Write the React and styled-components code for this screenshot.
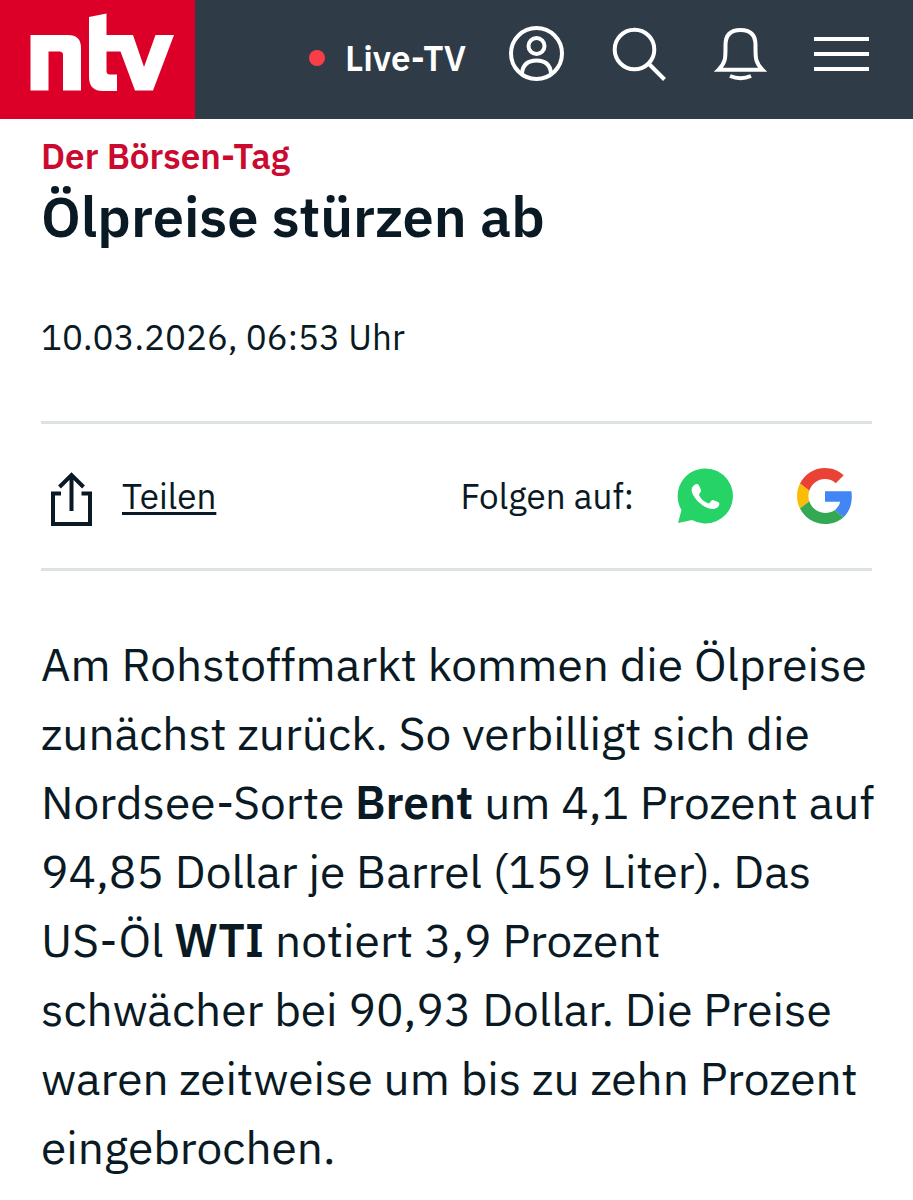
import React from 'react';
import styled, { createGlobalStyle } from 'styled-components';

const GlobalStyle = createGlobalStyle`
  * {
    box-sizing: border-box;
  }

  body {
    margin: 0;
    background: #fff;
    color: #0a1a24;
    font-family: "IBM Plex Sans", "Noto Sans", sans-serif;
  }
`;

const Header = styled.header`
  display: flex;
  height: 119px;
  background: #2f3c48;
`;

const LogoLink = styled.a`
  width: 195px;
  height: 119px;
  background: #dc0028;
`;

const HeaderNav = styled.nav`
  flex: 1;
  display: flex;
  align-items: center;
  justify-content: flex-end;
  gap: 42px;
  padding-right: 43px;
`;

const LiveLink = styled.a`
  display: flex;
  align-items: center;
  gap: 20px;
  padding-bottom: 3px;
  color: #fff;
  font-size: 35px;
  line-height: 48px;
  font-weight: 600;
  text-decoration: none;
`;

const LiveDot = styled.span`
  width: 16px;
  height: 16px;
  border-radius: 50%;
  background: #fb3d48;
`;

const IconBar = styled.div`
  display: flex;
  gap: 46px;
  padding-bottom: 11px;
`;

const IconButton = styled.button`
  width: 56px;
  height: 56px;
  padding: 0;
  border: none;
  background: none;
  cursor: pointer;
`;

const LineIcon = styled.svg`
  display: block;
  width: ${(props) => props.$size || 56}px;
  height: ${(props) => props.$size || 56}px;
  fill: none;
  stroke: currentColor;
  stroke-width: 4;
`;

const Article = styled.article`
  padding: 13px 41px 0;
`;

const Kicker = styled.p`
  margin: 0;
  color: #cb0a30;
  font-size: 35px;
  line-height: 48px;
  font-weight: 600;
`;

const Title = styled.h1`
  margin: 0;
  font-size: 56px;
  line-height: 72px;
  font-weight: 600;
`;

const PublishDate = styled.time`
  display: block;
  margin-top: 61px;
  font-size: 35px;
  line-height: 48px;
`;

const ShareBar = styled.div`
  display: flex;
  align-items: center;
  justify-content: space-between;
  height: 150px;
  margin-top: 60px;
  border-top: 3px solid #dde3e4;
  border-bottom: 3px solid #dde3e4;
`;

const ShareButton = styled.button`
  display: flex;
  align-items: center;
  gap: 21px;
  padding: 0;
  border: none;
  background: none;
  color: inherit;
  font-family: inherit;
  font-size: 35px;
  line-height: 48px;
  cursor: pointer;
`;

const ShareLabel = styled.span`
  text-decoration: underline;
  text-decoration-thickness: 3px;
  text-underline-offset: 3px;
`;

const Follow = styled.div`
  display: flex;
  align-items: center;
  gap: 43px;
  padding-right: 19px;
  font-size: 35px;
  line-height: 48px;
`;

const FollowLinks = styled.div`
  display: flex;
  gap: 64px;
`;

const BrandLink = styled.a`
  width: 56px;
  height: 56px;

  svg {
    display: block;
    width: 56px;
    height: 56px;
  }
`;

const Text = styled.p`
  margin: 59px -4px 0 0;
  font-size: 46px;
  line-height: 69px;

  strong {
    font-weight: 600;
  }
`;

const NoWrap = styled.span`
  white-space: nowrap;
`;

const Logo = () => (
  <svg width="195" height="119" viewBox="0 0 195 119" fill="#fff">
    <path d="M30.5 35H68Q81 35 81 48V90.500H63V55Q63 51.500 59.500 51.500H48.500V90.500H30.500Z" />
    <path d="M89 17L106.500 13.500V35H133L144 67L155.500 35H174L153 90.500H135L120.500 51.500H106.500V71Q106.500 74.500 110 74.500H117V91H103Q89 91 89 77Z" />
  </svg>
);

const UserIcon = () => (
  <LineIcon viewBox="0 0 56 56">
    <circle cx="28.500" cy="27.500" r="25.500" />
    <circle cx="28.500" cy="20" r="8" />
    <path d="M14 47C15 38 20 34.500 28.500 34.500S42 38 43 47" />
  </LineIcon>
);

const SearchIcon = () => (
  <LineIcon viewBox="0 0 56 56">
    <circle cx="24.500" cy="23.500" r="19.800" />
    <path d="M39 38L54.500 53.500" />
  </LineIcon>
);

const BellIcon = () => (
  <LineIcon viewBox="0 0 56 56">
    <path d="M13.500 19C13.500 8.500 19 4 28.500 4S43.500 8.500 43.500 19C43.500 32 43 36 50.500 43.800H6.500C14 36 13.500 32 13.500 19Z" />
    <path d="M18 50Q28.500 54.500 39 50" />
  </LineIcon>
);

const MenuIcon = () => (
  <LineIcon viewBox="0 0 56 56">
    <path d="M0 13H55M0 28H55M0 43H55" />
  </LineIcon>
);

const ShareIcon = () => (
  <LineIcon viewBox="0 0 60 60" $size={60}>
    <path d="M20 27.500H12V58H49V27.500H40.500" />
    <path d="M30.500 45V9M18.500 21L30.500 9L42.500 21" />
  </LineIcon>
);

const WhatsappIcon = () => (
  <svg viewBox="0 0 56 56">
    <path
      fill="#25d366"
      d="M28.500 0.500A27.500 27.500 0 1 1 15 52L1 55L4.500 42A27.500 27.500 0 0 1 28.500 0.500Z"
    />
    <path
      fill="#fff"
      d="M18 16.500C20 15.500 21.500 16 22 17.500L24 22C24.500 24 22 25.500 22 27C24 31 27 34 31.500 35.500C33 35.500 34 32 36 32L41 34C43 35 42.500 37 41 39C37 42.500 32 41 27.500 38.500C21 34.500 17 29.500 15 24.500C14 21 15 18.500 18 16.500Z"
    />
  </svg>
);

const GoogleIcon = () => (
  <svg viewBox="0 0 48 48">
    <path fill="#ea4335" d="M24 9.500c3.540 0 6.710 1.220 9.210 3.600l6.850-6.850C35.900 2.380 30.470 0 24 0 14.620 0 6.510 5.380 2.560 13.220l7.980 6.190C12.430 13.720 17.740 9.500 24 9.500z" />
    <path fill="#4285f4" d="M46.980 24.550c0-1.570-.15-3.090-.38-4.550H24v9.020h12.940c-.58 2.960-2.260 5.480-4.780 7.180l7.730 6c4.510-4.180 7.090-10.360 7.090-17.650z" />
    <path fill="#fbbc05" d="M10.530 28.590c-.48-1.450-.76-2.990-.76-4.590s.27-3.140.76-4.590l-7.980-6.190C.92 16.460 0 20.120 0 24c0 3.880.92 7.540 2.560 10.780l7.970-6.190z" />
    <path fill="#34a853" d="M24 48c6.480 0 11.930-2.130 15.890-5.810l-7.730-6c-2.150 1.450-4.920 2.300-8.160 2.300-6.260 0-11.570-4.220-13.470-9.910l-7.980 6.190C6.510 42.620 14.620 48 24 48z" />
  </svg>
);

const HeaderIcon = styled(IconButton)`
  color: #fff;
`;

const App = () => (
  <>
    <GlobalStyle />
    <Header>
      <LogoLink href="#start" aria-label="ntv">
        <Logo />
      </LogoLink>
      <HeaderNav>
        <LiveLink href="#live">
          <LiveDot />
          Live-TV
        </LiveLink>
        <IconBar>
          <HeaderIcon aria-label="Konto"><UserIcon /></HeaderIcon>
          <HeaderIcon aria-label="Suche"><SearchIcon /></HeaderIcon>
          <HeaderIcon aria-label="Mitteilungen"><BellIcon /></HeaderIcon>
          <HeaderIcon aria-label="Menü"><MenuIcon /></HeaderIcon>
        </IconBar>
      </HeaderNav>
    </Header>
    <Article>
      <Kicker>Der Börsen-Tag</Kicker>
      <Title>Ölpreise stürzen ab</Title>
      <PublishDate dateTime="2026-03-10T06:53">10.03.2026, 06:53 Uhr</PublishDate>
      <ShareBar>
        <ShareButton>
          <ShareIcon />
          <ShareLabel>Teilen</ShareLabel>
        </ShareButton>
        <Follow>
          Folgen auf:
          <FollowLinks>
            <BrandLink href="#whatsapp" aria-label="WhatsApp"><WhatsappIcon /></BrandLink>
            <BrandLink href="#google" aria-label="Google"><GoogleIcon /></BrandLink>
          </FollowLinks>
        </Follow>
      </ShareBar>
      <Text>
        Am Rohstoffmarkt kommen die Ölpreise zunächst zurück. So verbilligt
        sich die Nordsee-Sorte <strong>Brent</strong> um 4,1 Prozent auf 94,85
        Dollar je Barrel (159 Liter). Das <NoWrap>US-Öl</NoWrap>{' '}
        <strong>WTI</strong> notiert 3,9 Prozent schwächer bei 90,93 Dollar.
        Die Preise waren zeitweise um bis zu zehn Prozent eingebrochen.
      </Text>
    </Article>
  </>
);

export default App;
